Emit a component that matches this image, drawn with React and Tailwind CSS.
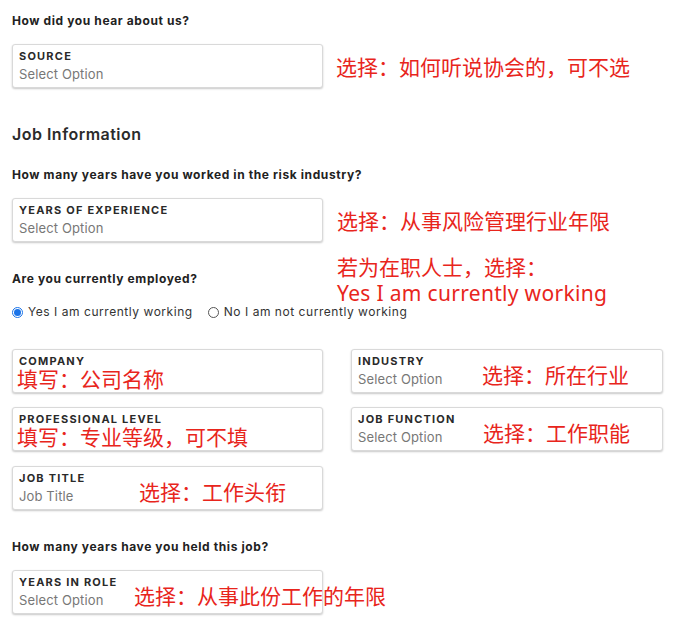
const Note = ({ children, className = "", style }) => (
  <span
    style={style}
    className={`font-['Noto_Sans_CJK_SC',sans-serif] text-[21px] leading-none text-[#e8251c] whitespace-nowrap ${className}`}
  >
    {children}
  </span>
);

const Field = ({ label, placeholder, note, noteLeft, replace, className = "" }) => (
  <div className={`relative h-[44px] w-[311px] rounded-[3px] border border-[#d9d9d9] bg-white shadow-[0_1px_2px_rgba(0,0,0,0.22)] ${className}`}>
    <div className="px-[6px] pt-[5px]">
      <div className="text-[11px] font-bold uppercase leading-[13px] tracking-[0.11em] text-[#2a2a2a]">{label}</div>
      {replace ? (
        <Note className="-ml-[2px] block">{replace}</Note>
      ) : (
        <div className="mt-[3px] text-[13px] leading-[16px] tracking-[0.01em] text-[#777]">{placeholder}</div>
      )}
    </div>
    {note && (
      <Note className="absolute top-[14px]" style={{ left: noteLeft }}>
        {note}
      </Note>
    )}
  </div>
);

const Question = ({ children, className = "" }) => (
  <h3 className={`text-[12px] font-bold leading-[16px] tracking-[0.05em] text-[#222] ${className}`}>{children}</h3>
);

const Radio = ({ checked, label }) => (
  <label className="flex items-center gap-[5px]">
    {checked ? (
      <span className="flex h-[11px] w-[11px] items-center justify-center rounded-full border border-[#1a73e8] bg-white">
        <span className="h-[7px] w-[7px] rounded-full bg-[#1a73e8]" />
      </span>
    ) : (
      <span className="h-[11px] w-[11px] rounded-full border border-[#555] bg-white" />
    )}
    <span className="text-[12px] leading-[16px] tracking-[0.045em] text-[#333]">{label}</span>
  </label>
);

export default function App() {
  return (
    <div className="min-h-[638px] w-[676px] bg-white px-[12px] font-['Inter',sans-serif]">
      <Question className="pt-[13px]">How did you hear about us?</Question>

      <div className="mt-[15px] flex items-center gap-[13px]">
        <Field label="Source" placeholder="Select Option" />
        <Note>选择：如何听说协会的，可不选</Note>
      </div>

      <h2 className="mt-[35px] text-[16px] font-semibold leading-[22px] tracking-[0.03em] text-[#2b2b2b]">Job Information</h2>

      <Question className="mt-[22px]">How many years have you worked in the risk industry?</Question>

      <div className="mt-[15px] flex items-center gap-[14px]">
        <Field label="Years of Experience" placeholder="Select Option" />
        <Note>选择：从事风险管理行业年限</Note>
      </div>

      <div className="relative">
        <Question className="pt-[29px]">Are you currently employed?</Question>
        <div className="mt-[17px] flex gap-[15px]">
          <Radio checked label="Yes I am currently working" />
          <Radio label="No I am not currently working" />
        </div>
        <div className="absolute left-[325px] top-[14px] flex flex-col gap-[6px]">
          <Note>若为在职人士，选择：</Note>
          <span className="font-['Noto_Sans',sans-serif] text-[21px] leading-none tracking-[0.015em] text-[#e8251c]">Yes I am currently working</span>
        </div>
      </div>

      <div className="mt-[29px] grid w-[651px] grid-cols-[311px_312px] gap-x-[28px] gap-y-[14px]">
        <Field label="Company" replace="填写：公司名称" />
        <Field label="Industry" placeholder="Select Option" note="选择：所在行业" noteLeft="130px" className="w-[312px]" />
        <Field label="Professional Level" replace="填写：专业等级，可不填" />
        <Field label="Job Function" placeholder="Select Option" note="选择：工作职能" noteLeft="131px" className="w-[312px]" />
        <Field label="Job Title" placeholder="Job Title" note="选择：工作头衔" noteLeft="126px" className="mt-[1px]" />
      </div>

      <Question className="mt-[29px]">How many years have you held this job?</Question>

      <div className="mt-[15px]">
        <Field label="Years in Role" placeholder="Select Option" note="选择：从事此份工作的年限" noteLeft="121px" />
      </div>
    </div>
  );
}
